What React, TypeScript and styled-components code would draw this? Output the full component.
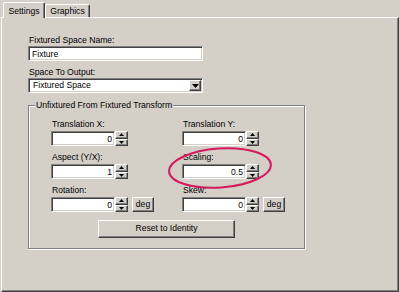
import React from "react";
import styled, { createGlobalStyle } from "styled-components";

const GlobalStyle = createGlobalStyle`
	html, body {
		margin: 0;
		padding: 0;
		background: #d4d0c8;
	}
	body {
		font-family: "Liberation Sans", Arial, sans-serif;
		font-size: 8.6px;
		color: #000;
	}
	* {
		box-sizing: border-box;
	}
`;

function Spinner() {
	return (
		<SpinBox>
			<SpinButton>
				<svg width="5" height="3" viewBox="0 0 5 3"><path d="M2.5 0 L5 3 L0 3 Z" fill="#000" /></svg>
			</SpinButton>
			<SpinButton>
				<svg width="5" height="3" viewBox="0 0 5 3"><path d="M0 0 L5 0 L2.5 3 Z" fill="#000" /></svg>
			</SpinButton>
		</SpinBox>
	);
}

function NumberField({ label, value, unit }: { label: string; value: string; unit?: boolean }) {
	return (
		<Field>
			<Label $spaced>{label}</Label>
			<InputRow>
				<NumInput readOnly value={value} />
				<Spinner />
				{unit && <SmallButton>deg</SmallButton>}
			</InputRow>
		</Field>
	);
}

export default function App() {
	return (
		<>
			<GlobalStyle />
			<Window>
				<TabStrip>
					<Tab $active>Settings</Tab>
					<Tab>Graphics</Tab>
				</TabStrip>
				<Panel>
					<Field>
						<Label>Fixtured Space Name:</Label>
						<TextInput readOnly value="Fixture" />
					</Field>
					<Field $gap>
						<Label>Space To Output:</Label>
						<Combo>
							<ComboText>Fixtured Space</ComboText>
							<DropButton>
								<svg width="7" height="4" viewBox="0 0 7 4"><path d="M0 0 L7 0 L3.5 4 Z" fill="#000" /></svg>
							</DropButton>
						</Combo>
					</Field>

					<GroupBox>
						<GroupTitle>Unfixtured From Fixtured Transform</GroupTitle>
						<GroupGrid>
							<NumberField label="Translation X:" value="0" />
							<NumberField label="Translation Y:" value="0" />
							<NumberField label="Aspect (Y/X):" value="1" />
							<NumberField label="Scaling:" value="0.5" />
							<NumberField label="Rotation:" value="0" unit />
							<NumberField label="Skew:" value="0" unit />
						</GroupGrid>
						<ResetRow>
							<ResetButton>Reset to Identity</ResetButton>
						</ResetRow>
					</GroupBox>
				</Panel>

				<Annotation width="112" height="52" viewBox="0 0 112 52">
					<ellipse cx="55" cy="24" rx="51" ry="19.5" transform="rotate(-4 55 24)" fill="none" stroke="#d6185c" strokeWidth="2" />
				</Annotation>
			</Window>
		</>
	);
}

const Window = styled.div`
	position: relative;
	width: 400px;
	height: 292px;
	padding: 2px 1px 0 1px;
	display: flex;
	flex-direction: column;
	background: #d4d0c8;
	overflow: hidden;
`;

const TabStrip = styled.div`
	display: flex;
	align-items: flex-end;
	height: 15px;
	padding-left: 2px;
`;

const Tab = styled.div<{ $active?: boolean }>`
	position: relative;
	z-index: ${props => props.$active ? 1 : 0};
	width: ${props => props.$active ? 42 : 45}px;
	height: ${props => props.$active ? 16 : 13}px;
	margin-bottom: ${props => props.$active ? -1 : 0}px;
	padding-top: ${props => props.$active ? 3 : 1}px;
	line-height: 11px;
	text-align: center;
	background: #d4d0c8;
	border-top: 1px solid #fff;
	border-left: 1px solid #fff;
	border-right: 1px solid #404040;
	border-radius: 2px 2px 0 0;
	box-shadow: inset -1px 0 0 #808080;
	white-space: nowrap;
`;

const Panel = styled.div`
	flex: 1;
	padding: 17px 0 0 26px;
	border-top: 1px solid #fff;
	border-left: 1px solid #fff;
	border-right: 1px solid #404040;
	border-bottom: 1px solid #404040;
	box-shadow: inset -1px -1px 0 #808080;
`;

const Field = styled.div<{ $gap?: boolean }>`
	display: flex;
	flex-direction: column;
	margin-top: ${props => props.$gap ? 6 : 0}px;
`;

const Label = styled.div<{ $spaced?: boolean }>`
	line-height: 11px;
	padding-left: 1px;
	margin-bottom: ${props => props.$spaced ? 1 : 0}px;
	white-space: nowrap;
`;

const sunken = `
	border: 1px solid;
	border-color: #808080 #fff #fff #808080;
	box-shadow: inset 1px 1px 0 #404040, inset -1px -1px 0 #d4d0c8;
	background: #fff;
`;

const TextInput = styled.input`
	${sunken}
	width: 175px;
	height: 15px;
	padding: 0 3px;
	font: inherit;
	color: #000;
	outline: none;
`;

const Combo = styled.div`
	${sunken}
	width: 175px;
	height: 15px;
	padding: 1px;
	display: flex;
	align-items: stretch;
`;

const ComboText = styled.div`
	flex: 1;
	line-height: 11px;
	padding-left: 3px;
`;

const raised = `
	background: #d4d0c8;
	border: 1px solid;
	border-color: #fff #404040 #404040 #fff;
	box-shadow: inset -1px -1px 0 #808080;
`;

const DropButton = styled.div`
	${raised}
	width: 12px;
	display: flex;
	align-items: center;
	justify-content: center;
`;

const GroupBox = styled.div`
	width: 277px;
	margin-top: 12px;
	padding-bottom: 10px;
	border: 1px solid #808080;
	box-shadow: inset 1px 1px 0 #fff, 1px 1px 0 #fff;
`;

const GroupTitle = styled.div`
	width: fit-content;
	margin: -6px 0 0 6px;
	padding: 0 1px;
	line-height: 11px;
	background: #d4d0c8;
`;

const GroupGrid = styled.div`
	display: grid;
	grid-template-columns: 131px 131px;
	row-gap: 6px;
	padding: 8px 0 0 22px;
`;

const InputRow = styled.div`
	display: flex;
	align-items: stretch;
	height: 15px;
`;

const NumInput = styled.input`
	${sunken}
	width: 64px;
	height: 15px;
	padding: 0 2px;
	font: inherit;
	color: #000;
	text-align: right;
	outline: none;
`;

const SpinBox = styled.div`
	width: 13px;
	display: flex;
	flex-direction: column;
`;

const SpinButton = styled.div`
	${raised}
	flex: 1;
	display: flex;
	align-items: center;
	justify-content: center;
`;

const SmallButton = styled.div`
	${raised}
	width: 22px;
	margin-left: 4px;
	line-height: 12px;
	text-align: center;
`;

const ResetRow = styled.div`
	display: flex;
	justify-content: center;
	margin-top: 8px;
`;

const ResetButton = styled.div`
	${raised}
	width: 137px;
	height: 18px;
	line-height: 15px;
	text-align: center;
`;

const Annotation = styled.svg`
	position: absolute;
	left: 165px;
	top: 144px;
	pointer-events: none;
`;
